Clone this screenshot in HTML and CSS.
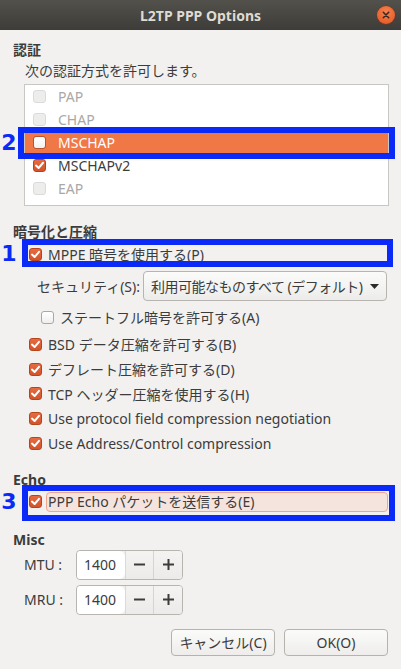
FILE: index.html
```html
<!DOCTYPE html>
<html lang="ja">
<head>
<meta charset="utf-8">
<title>L2TP PPP Options</title>
<link rel="stylesheet" href="styles.css">
</head>
<body>
<div class="window">
  <header class="titlebar">
    <span class="title">L2TP PPP Options</span>
    <span class="close"><svg width="18" height="18" viewBox="0 0 18 18"><path d="M6.3 6.3 L11.7 11.7 M11.7 6.3 L6.3 11.7" stroke="#3b2a22" stroke-width="1.6" stroke-linecap="round"/></svg></span>
  </header>
  <main class="content">
    <div class="heading h-auth">認証</div>
    <div class="subtitle">次の認証方式を許可します。</div>
    <div class="list">
      <div class="lrow disabled"><span class="cb cb-dis"></span><span>PAP</span></div>
      <div class="lrow disabled"><span class="cb cb-dis"></span><span>CHAP</span></div>
      <div class="lrow selected"><span class="cb cb-sel"></span><span>MSCHAP</span><span class="mark mark-2"></span><span class="num num-2">2</span></div>
      <div class="lrow"><span class="cb cb-on"><svg width="11" height="11" viewBox="0 0 11 11"><path d="M2 5.6 L4.6 8 L9 2.8" fill="none" stroke="#fff" stroke-width="2" stroke-linecap="round" stroke-linejoin="round"/></svg></span><span>MSCHAPv2</span></div>
      <div class="lrow disabled"><span class="cb cb-dis"></span><span>EAP</span></div>
    </div>

    <div class="heading h-enc">暗号化と圧縮</div>
    <div class="crow"><span class="cb cb-on"><svg width="11" height="11" viewBox="0 0 11 11"><path d="M2 5.6 L4.6 8 L9 2.8" fill="none" stroke="#fff" stroke-width="2" stroke-linecap="round" stroke-linejoin="round"/></svg></span><span>MPPE 暗号を使用する(P)</span><span class="mark mark-1"></span><span class="num num-1">1</span></div>
    <div class="secrow">
      <span class="seclabel">セキュリティ(S):</span>
      <div class="combo"><span class="combo-text">利用可能なものすべて (デフォルト)</span><svg class="arrow" width="9" height="5" viewBox="0 0 9 5"><path d="M0 0 H9 L4.5 5 Z" fill="#2b2b2b"/></svg></div>
    </div>
    <div class="crow sub"><span class="cb cb-off"></span><span>ステートフル暗号を許可する(A)</span></div>
    <div class="crow comp first"><span class="cb cb-on"><svg width="11" height="11" viewBox="0 0 11 11"><path d="M2 5.6 L4.6 8 L9 2.8" fill="none" stroke="#fff" stroke-width="2" stroke-linecap="round" stroke-linejoin="round"/></svg></span><span>BSD データ圧縮を許可する(B)</span></div>
    <div class="crow comp"><span class="cb cb-on"><svg width="11" height="11" viewBox="0 0 11 11"><path d="M2 5.6 L4.6 8 L9 2.8" fill="none" stroke="#fff" stroke-width="2" stroke-linecap="round" stroke-linejoin="round"/></svg></span><span>デフレート圧縮を許可する(D)</span></div>
    <div class="crow comp"><span class="cb cb-on"><svg width="11" height="11" viewBox="0 0 11 11"><path d="M2 5.6 L4.6 8 L9 2.8" fill="none" stroke="#fff" stroke-width="2" stroke-linecap="round" stroke-linejoin="round"/></svg></span><span>TCP ヘッダー圧縮を使用する(H)</span></div>
    <div class="crow comp"><span class="cb cb-on"><svg width="11" height="11" viewBox="0 0 11 11"><path d="M2 5.6 L4.6 8 L9 2.8" fill="none" stroke="#fff" stroke-width="2" stroke-linecap="round" stroke-linejoin="round"/></svg></span><span>Use protocol field compression negotiation</span></div>
    <div class="crow comp"><span class="cb cb-on"><svg width="11" height="11" viewBox="0 0 11 11"><path d="M2 5.6 L4.6 8 L9 2.8" fill="none" stroke="#fff" stroke-width="2" stroke-linecap="round" stroke-linejoin="round"/></svg></span><span>Use Address/Control compression</span></div>

    <div class="heading h-echo">Echo</div>
    <div class="crow echo"><span class="cb cb-on"><svg width="11" height="11" viewBox="0 0 11 11"><path d="M2 5.6 L4.6 8 L9 2.8" fill="none" stroke="#fff" stroke-width="2" stroke-linecap="round" stroke-linejoin="round"/></svg></span><span class="focus">PPP Echo パケットを送信する(E)</span><span class="mark mark-3"></span><span class="num num-3">3</span></div>

    <div class="heading h-misc">Misc</div>
    <div class="spinrow">
      <span class="spinlabel">MTU :</span>
      <div class="spin">
        <span class="spin-entry">1400</span>
        <span class="spin-btn"><svg width="11" height="11" viewBox="0 0 11 11"><rect x="0" y="4.5" width="11" height="2" fill="#3c3c3c"/></svg></span>
        <span class="spin-btn"><svg width="11" height="11" viewBox="0 0 11 11"><rect x="0" y="4.5" width="11" height="2" fill="#3c3c3c"/><rect x="4.5" y="0" width="2" height="11" fill="#3c3c3c"/></svg></span>
      </div>
    </div>
    <div class="spinrow second">
      <span class="spinlabel">MRU :</span>
      <div class="spin">
        <span class="spin-entry">1400</span>
        <span class="spin-btn"><svg width="11" height="11" viewBox="0 0 11 11"><rect x="0" y="4.5" width="11" height="2" fill="#3c3c3c"/></svg></span>
        <span class="spin-btn"><svg width="11" height="11" viewBox="0 0 11 11"><rect x="0" y="4.5" width="11" height="2" fill="#3c3c3c"/><rect x="4.5" y="0" width="2" height="11" fill="#3c3c3c"/></svg></span>
      </div>
    </div>

    <div class="footer">
      <button class="btn">キャンセル(C)</button>
      <button class="btn">OK(O)</button>
    </div>
  </main>
</div>
</body>
</html>
```

FILE: styles.css
```css
* { box-sizing: border-box; }
html, body { margin: 0; padding: 0; }
body {
  width: 401px;
  height: 669px;
  overflow: hidden;
  background: #f2f1f0;
  font-family: "Noto Sans", "Noto Sans CJK JP", sans-serif;
  font-size: 14px;
  color: #3c3c3c;
}
.titlebar {
  height: 30px;
  display: grid;
  grid-template-columns: 1fr auto 1fr;
  align-items: center;
  padding: 0 6px;
  background: linear-gradient(#52514c, #3d3c38);
}
.title {
  grid-column: 2;
  color: #dfdbd2;
  font-weight: bold;
  font-size: 14px;
}
.close {
  grid-column: 3;
  justify-self: end;
  width: 18px;
  height: 18px;
  border-radius: 50%;
  background: radial-gradient(circle at 50% 35%, #f7834f, #e0521f);
  box-shadow: 0 0 0 0.5px #8a3414;
  display: flex;
}
.content { padding: 0 12px 0 13px; }
.heading { font-weight: bold; height: 20px; line-height: 20px; }
.h-auth { margin-top: 10px; }
.h-enc { margin-top: 16px; }
.h-echo { margin-top: 14px; }
.h-misc { margin-top: 16px; }
.subtitle { height: 20px; line-height: 20px; margin: 1px 0 0 12px; }

.list {
  margin: 3px 0 0 11px;
  border: 1px solid #c9c7c3;
  background: #fff;
  padding-bottom: 5px;
}
.lrow {
  position: relative;
  height: 23px;
  display: flex;
  align-items: center;
  gap: 12px;
  padding-left: 8px;
}
.lrow.disabled { color: #a9a8a5; }
.lrow.selected { background: #f07746; color: #fff; }

.cb {
  flex: none;
  width: 13px;
  height: 13px;
  border-radius: 3px;
  display: inline-flex;
  align-items: center;
  justify-content: center;
}
.cb-on { background: linear-gradient(#e76b40, #d3532a); border: 1px solid #b4461f; }
.cb-off { background: linear-gradient(#ffffff, #f0efee); border: 1px solid #aaa8a4; }
.cb-dis { background: #ededec; border: 1px solid #dcdbd9; }
.cb-sel { background: linear-gradient(#ffffff, #f2f1f0); border: 1px solid #b9532e; }

.crow {
  position: relative;
  height: 24px;
  display: flex;
  align-items: center;
  gap: 6px;
  padding-left: 16px;
  white-space: nowrap;
}
.crow.sub { margin-top: 4px; padding-left: 28px; }
.crow.comp { height: 24.8px; }
.crow.first { margin-top: 3px; }
.crow.echo { gap: 4px; }
.focus {
  flex: 1;
  margin-right: 1px;
  height: 20px;
  line-height: 18px;
  padding-left: 1px;
  background: #f5e4de;
  border: 1px solid #f0a68c;
  border-radius: 4px;
}

.secrow {
  margin-top: 5px;
  height: 30px;
  display: flex;
  align-items: center;
  padding-left: 24px;
  padding-right: 2px;
  white-space: nowrap;
}
.combo {
  margin-left: auto;
  flex: none;
  width: 244px;
  height: 30px;
  display: flex;
  align-items: center;
  padding: 0 7px 0 7px;
  border: 1px solid #b8b5b0;
  border-radius: 4px;
  background: linear-gradient(#fbfbfa, #edecea);
}
.combo-text { white-space: nowrap; letter-spacing: -0.5px; }
.arrow { flex: none; margin-left: auto; }

.spinrow {
  display: flex;
  align-items: center;
  height: 30px;
  padding-left: 11px;
}
.spinrow.second { margin-top: 5px; }
.spinlabel { width: 52px; }
.spin {
  display: flex;
  width: 107px;
  height: 30px;
  border: 1px solid #b8b5b0;
  border-radius: 4px;
  overflow: hidden;
  background: #f0efed;
}
.spin-entry {
  width: 48px;
  background: #fff;
  display: flex;
  align-items: center;
  padding-left: 7px;
  border-radius: 3px 6px 6px 3px;
}
.spin-btn {
  width: 29px;
  display: flex;
  align-items: center;
  justify-content: center;
  border-left: 1px solid #d6d4d0;
  background: linear-gradient(#f4f3f2, #ecebe9);
}
.spin-entry + .spin-btn { border-left: 1px solid #dcdad6; }

.footer {
  margin-top: 14px;
  display: flex;
  justify-content: flex-end;
  gap: 9px;
  padding-right: 1px;
}
.btn {
  width: 104px;
  height: 27px;
  padding: 0;
  font-family: inherit;
  font-size: 14px;
  color: #3c3c3c;
  border: 1px solid #b6b3ae;
  border-radius: 4px;
  background: linear-gradient(#fbfbfa, #eeedeb);
}

.mark {
  position: absolute;
  border: 6px solid #0b2af7;
  pointer-events: none;
}
.mark-2 { left: -7px; top: -4px; width: 377px; height: 32px; }
.mark-1 { left: 9px; top: -3px; width: 371px; height: 28px; }
.mark-3 { left: 9px; top: -5px; width: 373px; height: 36px; }
.num {
  position: absolute;
  width: 16px;
  text-align: center;
  font-family: "DejaVu Sans", sans-serif;
  font-weight: bold;
  font-size: 22px;
  line-height: 24px;
  color: #0b2af7;
  top: 0;
}
.num-2 { left: -24px; }
.num-1 { left: -12px; }
.num-3 { left: -12px; }
```
